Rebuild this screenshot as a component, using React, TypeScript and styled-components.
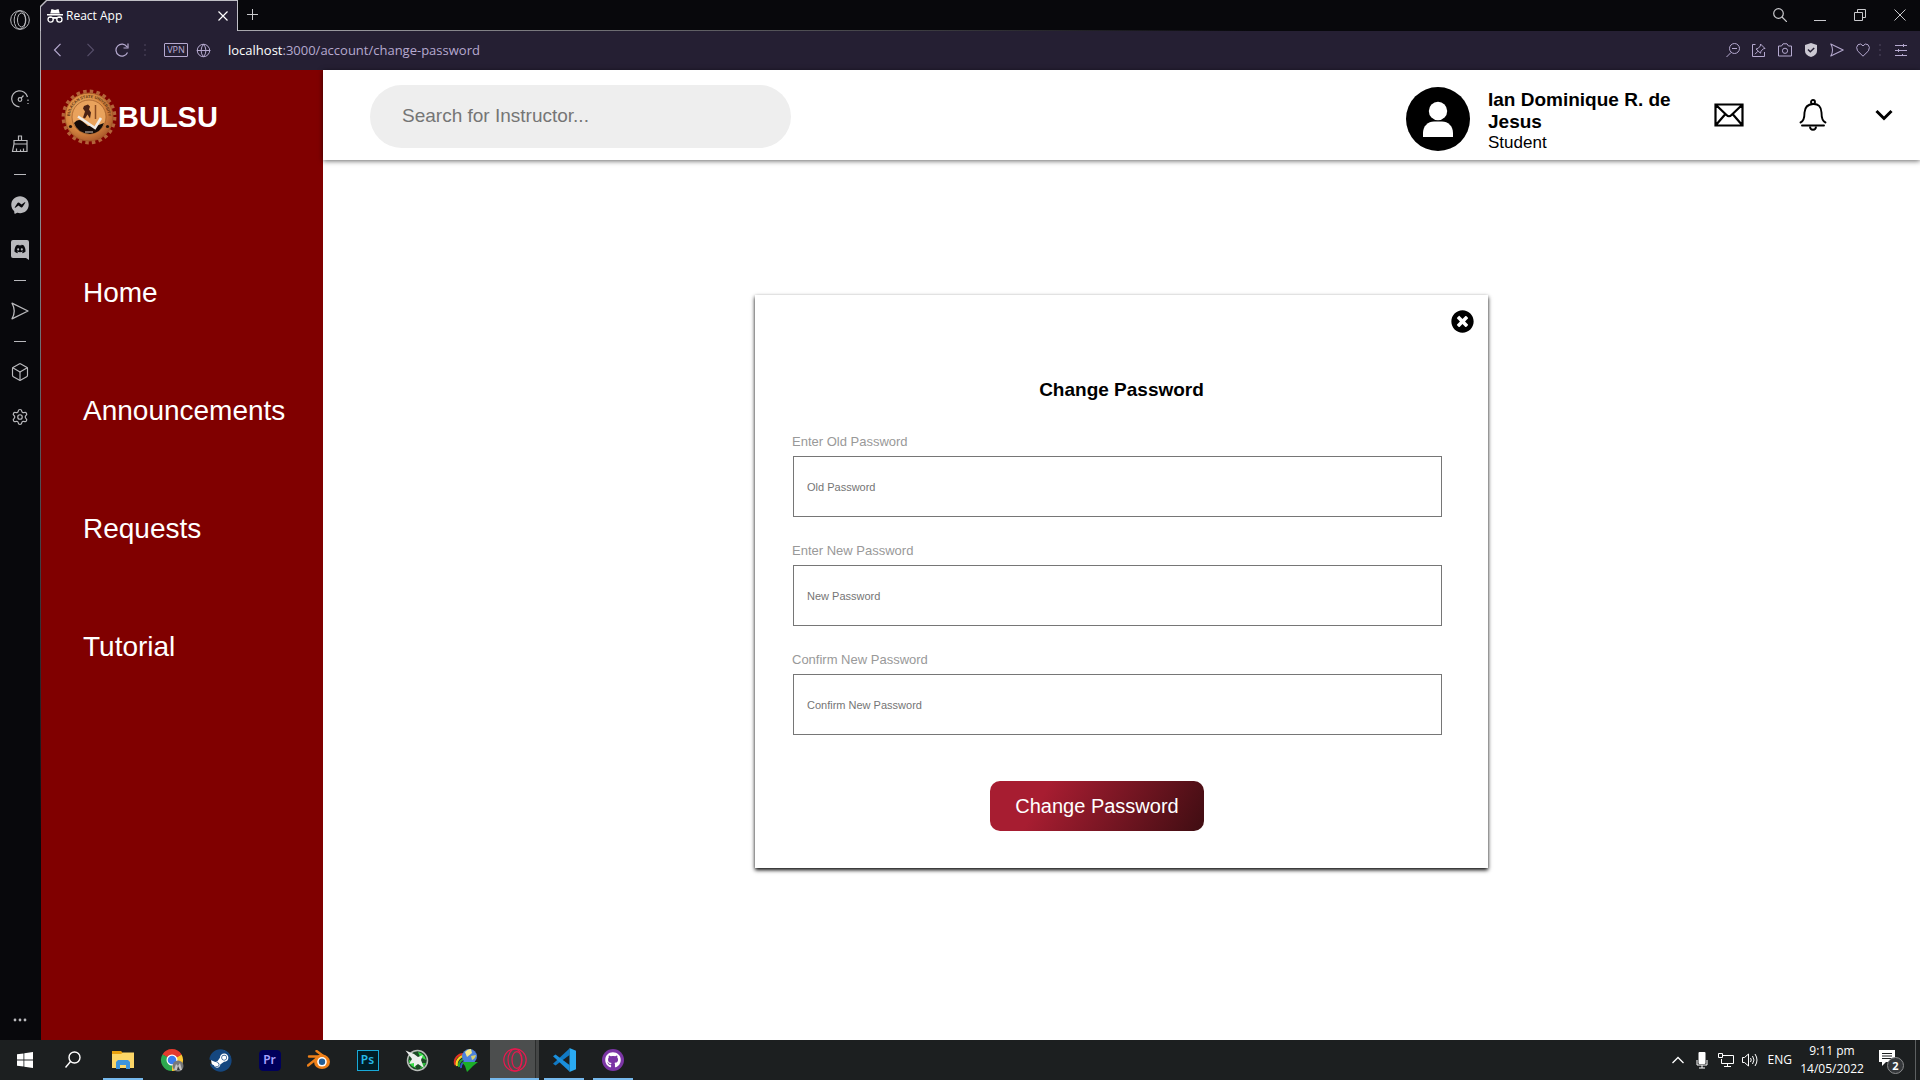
import React from "react";
import styled, { createGlobalStyle, css } from "styled-components";
import { Box, Settings, Globe } from "lucide-react";
import { FaTimesCircle, FaFacebookMessenger, FaDiscord, FaSteam, FaGithub } from "react-icons/fa";

const ui = `"Noto Sans", "Open Sans", sans-serif`;
const page = `"Liberation Sans", Arial, sans-serif`;

const GlobalStyle = createGlobalStyle`
  *, *::before, *::after { box-sizing: border-box; }
  body { margin: 0; background: #08080c; }
  button, input { font: inherit; margin: 0; }
`;

const Desktop = styled.div`
  min-height: 100vh;
  display: flex;
  flex-direction: column;
  font-family: ${ui};
`;

const Browser = styled.div`
  flex: 1;
  display: flex;
  background: #08080c;
`;

const bareButton = css`
  border: 0;
  padding: 0;
  background: none;
  color: inherit;
  display: inline-flex;
  align-items: center;
  justify-content: center;
  cursor: pointer;
`;

const IconButton = styled.button<{ $w?: number; $h?: number }>`
  ${bareButton}
  flex: none;
  width: ${(p) => p.$w ?? 20}px;
  height: ${(p) => p.$h ?? 20}px;
  svg { display: block; flex: none; }
  &:disabled { color: #564e69; }
`;

/* ---------- browser rail ---------- */

const Rail = styled.aside`
  width: 40px;
  flex: none;
  display: flex;
  flex-direction: column;
  align-items: center;
  padding: 8px 1px 10px 0;
  color: #b9b9bd;
`;

const RailGroup = styled.div<{ $top?: number }>`
  display: flex;
  flex-direction: column;
  align-items: center;
  gap: 21px;
  margin-top: ${(p) => p.$top ?? 0}px;
`;

const RailDash = styled.hr`
  width: 12px;
  height: 1px;
  border: 0;
  margin: 18px 0 0;
  background: #b9b9bd;
`;

const RailMore = styled.div`
  margin-top: auto;
`;

/* ---------- browser chrome ---------- */

const Window = styled.div`
  flex: 1;
  min-width: 0;
  display: flex;
  flex-direction: column;
`;

const TabStrip = styled.div`
  height: 31px;
  display: flex;
`;

const chamfer = css`
  clip-path: polygon(6px 0, 100% 0, 100% 100%, 0 100%, 0 6px);
`;

const Tab = styled.div`
  ${chamfer}
  width: 198px;
  padding: 1px 1px 0;
  background: #c0bfc6;
`;

const TabFace = styled.div`
  ${chamfer}
  height: 100%;
  display: flex;
  align-items: center;
  gap: 3px;
  padding: 0 4px 0 6px;
  background: #251f33;
  color: #fff;
  font-size: 12px;
  line-height: 16px;
`;

const TabTitle = styled.span`
  flex: 1;
  font-family: "Open Sans", sans-serif;
`;

const StripRest = styled.div`
  flex: 1;
  display: flex;
  align-items: center;
  justify-content: space-between;
  padding: 0 10px 2px 4px;
  color: #c9c9cd;
  background: linear-gradient(90deg, #a9a8ae, #08080c 60%) bottom / 100% 1px no-repeat;
`;

const WindowControls = styled.div`
  display: flex;
  gap: 20px;
`;

const AddressBar = styled.div`
  height: 39px;
  display: flex;
  align-items: center;
  padding: 0 9px 1px 7px;
  border-left: 1px solid #a9a8ae;
  background: #251f33;
  color: #b5a9cf;
`;

const NavButtons = styled.div`
  display: flex;
  gap: 12px;
`;

const Dots = styled.span<{ $left: number; $right: number }>`
  width: 2px;
  height: 12px;
  flex: none;
  margin: 0 ${(p) => p.$right}px 0 ${(p) => p.$left}px;
  background: repeating-linear-gradient(#3a3349 0 2px, transparent 2px 5px);
`;

const Vpn = styled.button`
  ${bareButton}
  width: 24px;
  height: 14px;
  border: 1px solid #b5a9cf;
  border-radius: 1px;
  font-size: 9px;
  line-height: 12px;
`;

const Url = styled.div`
  margin-left: 10px;
  flex: 1;
  font-family: "Open Sans", sans-serif;
  font-size: 13px;
  line-height: 18px;
  color: #b5a9cf;
  b { color: #fff; font-weight: 400; }
`;

const ToolButtons = styled.div`
  display: flex;
  gap: 6px;
`;

/* ---------- web page ---------- */

const Viewport = styled.div`
  flex: 1;
  display: flex;
`;

const Edge = styled.div`
  width: 1px;
  flex: none;
  background: linear-gradient(#a9a8ae, #55545a 40%, #08080c 80%);
`;

const SideNav = styled.nav`
  width: 282px;
  flex: none;
  background: #800000;
  color: #fff;
  font-family: ${page};
`;

const Brand = styled.a`
  display: flex;
  align-items: center;
  gap: 1px;
  padding: 19px 0 0 20px;
  color: inherit;
  text-decoration: none;
  font-size: 29px;
  line-height: 56px;
  font-weight: 700;
`;

const Menu = styled.ul`
  list-style: none;
  margin: 132px 0 0;
  padding: 0 0 0 42px;
  display: flex;
  flex-direction: column;
  gap: 86px;
`;

const MenuLink = styled.a`
  display: block;
  color: #fff;
  text-decoration: none;
  font-size: 28px;
  line-height: 32px;
`;

const Content = styled.div`
  flex: 1;
  min-width: 0;
  display: flex;
  flex-direction: column;
  background: #fff;
  color: #000;
  font-family: ${page};
`;

const Header = styled.header`
  height: 90px;
  display: flex;
  align-items: center;
  padding: 2px 27px 0 47px;
  background: #fff;
  box-shadow: 0 1px 5px rgba(0, 0, 0, 0.6);
`;

const Search = styled.input`
  width: 421px;
  height: 63px;
  padding: 0 32px;
  border: 0;
  border-radius: 32px;
  background: #eee;
  font-size: 19px;
  line-height: 22px;
  &::placeholder { color: #757575; opacity: 1; }
`;

const Profile = styled.div`
  margin-left: auto;
  padding-top: 6px;
  display: flex;
  align-items: center;
  gap: 18px;
`;

const Who = styled.div`
  width: 190px;
  padding-top: 4px;
`;

const Name = styled.div`
  font-size: 19px;
  line-height: 22px;
  font-weight: 700;
`;

const Role = styled.div`
  font-size: 17px;
  line-height: 20px;
`;

const HeaderActions = styled.div`
  display: flex;
  align-items: center;
  margin-left: 29px;
  padding-bottom: 2px;
  gap: 40px;
`;

const Main = styled.main`
  flex: 1;
  display: flex;
  justify-content: center;
  align-items: flex-start;
  padding: 135px 0 100px;
`;

const Card = styled.section`
  width: 733px;
  padding: 14px 15px 37px 37px;
  background: #fff;
  box-shadow: 0 2px 4px #000;
`;

const CardTop = styled.div`
  display: flex;
  justify-content: flex-end;
`;

const CardTitle = styled.h1`
  margin: 46px 22px 0 0;
  text-align: center;
  font-size: 19px;
  line-height: 22px;
  font-weight: 700;
`;

const Form = styled.form`
  margin: 33px 31px 0 0;
  display: flex;
  flex-direction: column;
  gap: 26px;
`;

const Field = styled.label`
  display: flex;
  flex-direction: column;
  gap: 6px;
  font-size: 13px;
  line-height: 16px;
  color: #999;
`;

const PasswordInput = styled.input`
  height: 61px;
  margin-left: 1px;
  padding: 0 13px;
  border: 1px solid #767676;
  border-radius: 0;
  background: #fff;
  font-size: 11px;
  line-height: 14px;
  &::placeholder { color: #757575; opacity: 1; }
`;

const Actions = styled.div`
  display: flex;
  justify-content: center;
  padding: 20px 40px 0 0;
`;

const Submit = styled.button`
  width: 214px;
  height: 50px;
  border: 0;
  padding: 0;
  border-radius: 10px;
  background: linear-gradient(120deg, #a71d31 25%, #3f0d12 100%);
  color: #fff;
  font-size: 20px;
  line-height: 24px;
`;

/* ---------- task bar ---------- */

const Taskbar = styled.footer`
  height: 40px;
  display: flex;
  justify-content: space-between;
  background: #1c1f20;
  color: #fff;
`;

const Apps = styled.div`
  display: flex;
`;

const AppButton = styled.button<{ $open?: boolean; $active?: boolean }>`
  ${bareButton}
  width: 49px;
  height: 40px;
  background: ${(p) =>
    p.$active
      ? "linear-gradient(#76b9ed, #76b9ed) bottom / 100% 2px no-repeat, linear-gradient(90deg, #4c4e4e 45px, #2b2d2d 45px 46px, #444646 46px)"
      : p.$open
      ? "linear-gradient(#76b9ed, #76b9ed) 5px 100% / 40px 2px no-repeat"
      : "none"};
`;

const Adobe = styled.span<{ $fg: string; $bg: string; $edge: string; $round: number }>`
  width: 22px;
  height: 21px;
  display: flex;
  align-items: center;
  justify-content: center;
  border: 1px solid ${(p) => p.$edge};
  border-radius: ${(p) => p.$round}px;
  background: ${(p) => p.$bg};
  color: ${(p) => p.$fg};
  font-size: 12px;
  line-height: 14px;
  font-weight: 600;
`;

const Stack = styled.span`
  display: grid;
  place-items: center;
  > * { grid-area: 1 / 1; }
`;

const Disc = styled.span<{ $size: number; $bg: string }>`
  width: ${(p) => p.$size}px;
  height: ${(p) => p.$size}px;
  border-radius: 50%;
  background: ${(p) => p.$bg};
`;

const Tray = styled.div`
  display: flex;
  align-items: center;
  padding-right: 4px;
  font-family: "Open Sans", sans-serif;
  font-size: 12px;
  line-height: 18px;
`;

const TrayIcons = styled.div`
  display: flex;
  gap: 4px;
  margin-right: 8px;
`;

const Clock = styled.time`
  margin: 0 16px 0 10px;
  width: 60px;
  white-space: nowrap;
  display: flex;
  flex-direction: column;
  align-items: center;
`;

const Notices = styled.button`
  ${bareButton}
  position: relative;
  width: 26px;
  height: 28px;
  margin-right: 11px;
`;

const Count = styled.span`
  position: absolute;
  right: 0;
  bottom: 0;
  width: 17px;
  height: 17px;
  border: 1px solid #8a8c8d;
  border-radius: 50%;
  background: #34373a;
  font-size: 11px;
  line-height: 15px;
  font-weight: 700;
  text-align: center;
`;

const ShowDesktop = styled.div`
  width: 1px;
  height: 40px;
  background: #5d6061;
`;

/* ---------- drawings ---------- */

type LineProps = { w?: number; h?: number; box?: string; sw?: number; color?: string; children: React.ReactNode };
const Line = ({ w = 20, h = 20, box, sw = 1, color = "currentColor", children }: LineProps) => (
  <svg width={w} height={h} viewBox={box ?? `0 0 ${w} ${h}`} fill="none" stroke={color} strokeWidth={sw} aria-hidden="true">
    {children}
  </svg>
);

const OperaMark = ({ size = 20, sw = 1.2, color = "currentColor" }) => (
  <Line w={size} h={size} box="0 0 24 24" sw={sw} color={color}>
    <circle cx="12" cy="12" r="11.200" />
    <ellipse cx="12" cy="12" rx="7" ry="11" />
    <ellipse cx="13.800" cy="12" rx="4.800" ry="8.400" />
  </Line>
);

const Plane = ({ size = 18 }) => (
  <Line w={size} h={size} box="0 0 18 18" sw={1.3}>
    <path d="M1 1.200 17 9 1 16.800Q5.500 9 1 1.200Z" strokeLinejoin="round" />
  </Line>
);

const Seal = () => (
  <svg width="56" height="56" viewBox="0 0 56 56" aria-hidden="true">
    <defs>
      <radialGradient id="seal" cx="0.42" cy="0.4" r="0.65">
        <stop offset="0" stopColor="#f6c27c" />
        <stop offset="0.6" stopColor="#d98a42" />
        <stop offset="1" stopColor="#a8562a" />
      </radialGradient>
      <path id="sealArc" d="M10.500 36A19.200 19.200 0 1 1 45.500 36" />
    </defs>
    <circle cx="28" cy="28" r="25.400" fill="none" stroke="#b4633a" strokeWidth="4" strokeDasharray="3.500 3.150" />
    <circle cx="28" cy="28" r="24" fill="url(#seal)" stroke="#a65a28" strokeWidth="1" />
    <circle cx="28" cy="28" r="17" fill="#e9a25c" stroke="#8d4a1f" strokeWidth="0.6" />
    <text fontSize="4" fontWeight="700" fill="#5b3212" fontFamily="Liberation Sans, sans-serif">
      <textPath href="#sealArc" startOffset="50%" textAnchor="middle">BULACAN STATE UNIVERSITY</textPath>
    </text>
    <circle cx="9.500" cy="37.500" r="1.600" fill="#2a140a" />
    <circle cx="46.500" cy="37.500" r="1.600" fill="#2a140a" />
    <path d="M23 17l4-1.500 2 2-1 3 2 3-1 6-2.500-4-2.500 4-2-1 2-6-2-3z" fill="#4a2114" />
    <path d="M34.500 16v14" stroke="#8a4a22" strokeWidth="1.500" />
    <path d="M13 34q4-5 8-2l6 5h8l8-3q-3 10-14 11-13-1-16-11z" fill="#150b08" />
    <path d="M17 27.500 34 39l6-10" fill="none" stroke="#efeae6" strokeWidth="2.600" />
    <path d="M24 43h8" stroke="#d8c9bd" strokeWidth="1" />
  </svg>
);

const Avatar = () => (
  <svg width="64" height="64" viewBox="0 0 64 64" role="img" aria-label="Profile picture">
    <circle cx="32" cy="32" r="32" fill="#000" />
    <circle cx="32" cy="24" r="9.200" fill="#fff" />
    <path d="M17 50v-4c0-7 5-11.500 11-11.500h8c6 0 11 4.500 11 11.500v4z" fill="#fff" />
  </svg>
);

const Chrome = () => (
  <svg width="24" height="24" viewBox="0 0 24 24" aria-hidden="true">
    <path d="M12 12 2.470 6.500A11 11 0 0 1 21.530 6.500Z" fill="#e33b2e" />
    <path d="M12 12 21.530 6.500A11 11 0 0 1 12 23Z" fill="#fcc934" />
    <path d="M12 12V23A11 11 0 0 1 2.470 6.500Z" fill="#2da94f" />
    <path d="M12 6.500h9.500L12 12z" fill="#e33b2e" />
    <path d="M12 12 7.200 14.800 2.470 6.500z" fill="#2da94f" />
    <circle cx="12" cy="12" r="5.500" fill="#fff" />
    <circle cx="12" cy="12" r="4.300" fill="#3b7ded" />
    <circle cx="18" cy="18" r="5.500" fill="#77797b" />
    <path d="M14 22l2-6 2 2 2-3 2 7z" fill="#c3c3c3" />
    <path d="M17 22l1-4 2 4z" fill="#3b3b3b" />
  </svg>
);

const Explorer = () => (
  <svg width="22" height="20" viewBox="0 0 22 20" aria-hidden="true">
    <path d="M0 1h9l2 2h11v15H0z" fill="#e9a10f" />
    <path d="M0 4h9l2-1.500h11V18H0z" fill="#fcd667" />
    <path d="M4 19v-7l2-2h10l2 2v7h-4v-4H8v4z" fill="#3c94dc" />
  </svg>
);

const Blender = () => (
  <svg width="24" height="20" viewBox="0 0 24 20" aria-hidden="true">
    <path d="M9.500 1 19 8M2 6.500h14M1 15.500 11 7.500" fill="none" stroke="#ee8019" strokeWidth="2.400" strokeLinecap="round" />
    <ellipse cx="15" cy="11.800" rx="8" ry="7.200" fill="#ee8019" />
    <circle cx="15" cy="11.800" r="4.800" fill="#fff" />
    <circle cx="15" cy="11.800" r="3.200" fill="#235e97" />
  </svg>
);

const GreenPlane = () => (
  <svg width="24" height="24" viewBox="0 0 24 24" aria-hidden="true">
    <circle cx="12.500" cy="12.500" r="10" fill="#1d4a26" stroke="#b9bdb9" strokeWidth="1.500" />
    <path d="M13 4q7 2 8 8l-6-3zM4 12l5 2 2 6q-7-2-7-8z" fill="#35dd45" />
    <path d="M17 15h4q-2 5-6 6z" fill="#2eb83c" />
    <path d="M.5 2.500 9 6l4 3 5-2-2 5 3 8-6-4-4 3v-4l-5 1 3-5-3-4z" fill="#eceeec" />
  </svg>
);

const Idm = () => (
  <svg width="26" height="24" viewBox="0 0 26 24" fill="none" aria-hidden="true">
    <path d="M2.500 17A9 8 0 0 1 12 6" stroke="#e33422" strokeWidth="2" />
    <path d="M4 18A8.500 8 0 0 1 13 8" stroke="#f7d51f" strokeWidth="2.200" />
    <path d="M6 19A8 7 0 0 1 14 10.500" stroke="#29a336" strokeWidth="2" />
    <path d="M8 20A7 6 0 0 1 14 13" stroke="#3155c6" strokeWidth="2" />
    <circle cx="16.500" cy="8.500" r="7.500" fill="#4d82dc" />
    <path d="M12 4q3-3.500 6-3l1 4-5 4z" fill="#f3e88a" />
    <path d="M18 8l5-1q-1 4-4 5z" fill="#d7d06f" />
    <path d="M9 14l7 0 9 0-5 4-6 6-2-6z" fill="#1cad28" />
  </svg>
);

const VsCode = () => (
  <svg width="24" height="24" viewBox="0 0 24 24" aria-hidden="true">
    <path d="M1 15.800 17.500.5v6.500L3.500 17.500z" fill="#1179c4" />
    <path d="M1 8.200 17.500 23.500V17L3.500 6.500z" fill="#1a8fdc" />
    <path d="M17.500 0 24 2.800v18.400L17.500 24z" fill="#2aaaf2" />
  </svg>
);

/* ---------- screen ---------- */

const menu = ["Home", "Announcements", "Requests", "Tutorial"];
const fields = [
  { label: "Enter Old Password", hint: "Old Password" },
  { label: "Enter New Password", hint: "New Password" },
  { label: "Confirm New Password", hint: "Confirm New Password" },
];

export default function App() {
  return (
    <>
      <GlobalStyle />
      <Desktop>
        <Browser>
          <Rail>
            <IconButton aria-label="Opera menu" $h={24}><OperaMark /></IconButton>
            <RailGroup $top={55}>
              <IconButton aria-label="Speed dial" $h={24}>
                <Line w={18} h={18} sw={1.2}>
                  <path d="M8.500 16.800A8 8 0 1 1 16.500 7" />
                  <circle cx="9" cy="9.500" r="1.800" />
                  <path d="M10.200 8.200 12.500 5.500M17 9.500v1.500M17 13v1" />
                </Line>
              </IconButton>
              <IconButton aria-label="Cleaner" $h={24}>
                <Line w={18} h={18} sw={1.2}>
                  <path d="M7.500 5.500V1h3v4.500M3 5.500h13v11H1.500L3 9zM3 9h13M5.500 16.500v-3M9.500 16.500v-2M12.500 16.500v-3" />
                </Line>
              </IconButton>
            </RailGroup>
            <RailDash />
            <RailGroup $top={18}>
              <IconButton aria-label="Messenger" $h={24}><FaFacebookMessenger size={18} /></IconButton>
              <IconButton aria-label="Discord" $h={24}>
                <svg width="18" height="20" viewBox="0 0 18 20" aria-hidden="true">
                  <path d="M2 0h14a2 2 0 0 1 2 2v18l-3-2H2a2 2 0 0 1-2-2V2a2 2 0 0 1 2-2z" fill="#b9b9bd" />
                  <FaDiscord x={3} y={3} size={12} color="#08080c" />
                </svg>
              </IconButton>
            </RailGroup>
            <RailDash />
            <RailGroup $top={18}>
              <IconButton aria-label="My Flow" $h={24}><Plane /></IconButton>
            </RailGroup>
            <RailDash />
            <RailGroup $top={18}>
              <IconButton aria-label="Extensions" $h={24}><Box size={20} strokeWidth={1.4} /></IconButton>
              <IconButton aria-label="Settings" $h={24}><Settings size={18} strokeWidth={1.6} /></IconButton>
            </RailGroup>
            <RailMore>
              <IconButton aria-label="More">
                <svg width="14" height="4" viewBox="0 0 14 4" fill="currentColor" aria-hidden="true">
                  <circle cx="2" cy="2" r="1.400" /><circle cx="7" cy="2" r="1.400" /><circle cx="12" cy="2" r="1.400" />
                </svg>
              </IconButton>
            </RailMore>
          </Rail>

          <Window>
            <TabStrip>
              <Tab>
                <TabFace>
                  <svg width="16" height="14" viewBox="0 0 16 14" fill="#fff" aria-hidden="true">
                    <path d="M4.500 0 8 1l3.500-1 1.300 4.500H3.200zM0 5h16v1.600H0z" />
                    <circle cx="3.600" cy="10.500" r="2.600" fill="none" stroke="#fff" strokeWidth="1.300" />
                    <circle cx="12.400" cy="10.500" r="2.600" fill="none" stroke="#fff" strokeWidth="1.300" />
                    <path d="M6 9.800q2-1.200 4 0" fill="none" stroke="#fff" />
                    <path d="M1 8h14v1H1z" />
                  </svg>
                  <TabTitle>React App</TabTitle>
                  <IconButton aria-label="Close tab"><Line w={10} h={10} sw={1.2}><path d="m.5.5 9 9m0-9-9 9" /></Line></IconButton>
                </TabFace>
              </Tab>
              <StripRest>
                <IconButton aria-label="New tab"><Line w={11} h={11}><path d="M5.500 0v11M0 5.500h11" /></Line></IconButton>
                <WindowControls>
                  <IconButton aria-label="Search tabs"><Line w={14} h={14} sw={1.2}><circle cx="5.500" cy="5.500" r="4.800" /><path d="m9 9 5 5" /></Line></IconButton>
                  <IconButton aria-label="Minimize"><Line w={12} h={12}><path d="M0 11.500h12" /></Line></IconButton>
                  <IconButton aria-label="Restore"><Line w={12} h={12}><path d="M.5 3.500h8v8h-8zM3.500 3V.5h8v8H9" /></Line></IconButton>
                  <IconButton aria-label="Close window"><Line w={12} h={12}><path d="m.5.5 11 11m0-11-11 11" /></Line></IconButton>
                </WindowControls>
              </StripRest>
            </TabStrip>

            <AddressBar>
              <NavButtons>
                <IconButton aria-label="Back"><Line w={14} h={14} sw={1.2}><path d="m9.500.8-6 6.200 6 6.200" /></Line></IconButton>
                <IconButton aria-label="Forward" disabled><Line w={14} h={14} sw={1.2}><path d="m4.500.8 6 6.200-6 6.200" /></Line></IconButton>
                <IconButton aria-label="Reload"><Line w={14} h={14} sw={1.2}><path d="M12.500 9.500A6 6 0 1 1 12 3.800M13 .5v4.500H8.500" /></Line></IconButton>
              </NavButtons>
              <Dots $left={12} $right={18} />
              <Vpn type="button">VPN</Vpn>
              <IconButton aria-label="Site information" $w={30}><Globe size={15} strokeWidth={1.6} /></IconButton>
              <Url><b>localhost</b>:3000/account/change-password</Url>
              <ToolButtons>
                <IconButton aria-label="Zoom"><Line w={14} h={14}><circle cx="8.500" cy="5.500" r="5" /><path d="m5 9.500-4.500 4.500M6 5.500h5" /></Line></IconButton>
                <IconButton aria-label="Pinboard"><Line w={14} h={14}><path d="M3.500 1.500h-3v12h12V9M8.500 1l4.500 4.500-1.500.2-2.500 2.500-.5 2L4 6l2-.5L8.300 3zM6 8.200l-3 3" /></Line></IconButton>
                <IconButton aria-label="Snapshot"><Line w={14} h={14}><path d="M.5 3h3L5 .8h4L10.500 3h3v10H.5z" /><circle cx="7" cy="7.800" r="2.600" /></Line></IconButton>
                <IconButton aria-label="Ad blocker">
                  <svg width="12" height="14" viewBox="0 0 12 14" aria-hidden="true"><path d="M6 0l6 2v6q0 4-6 6-6-2-6-6V2z" fill="#cbc8d2" /><path d="m3 6.500 2.300 2.300L9.200 5" fill="none" stroke="#251f33" strokeWidth="1.500" /></svg>
                </IconButton>
                <IconButton aria-label="Send to flow"><Plane size={14} /></IconButton>
                <IconButton aria-label="Bookmark"><Line w={14} h={14}><path d="M7 13.200 1.500 7.800Q-.5 4 2 1.700q3-2 5 1.200 2-3.200 5-1.200 2.500 2.300.5 6.100z" /></Line></IconButton>
              </ToolButtons>
              <Dots $left={6} $right={10} />
              <IconButton aria-label="Easy setup"><Line w={12} h={12}><path d="M0 1.500h12M0 6.500h12M0 11.500h12M8.500 0v3M3.500 5v3M7.500 10v2" /></Line></IconButton>
            </AddressBar>

            <Viewport>
              <Edge />
              <SideNav>
                <Brand href="#"><Seal />BULSU</Brand>
                <Menu>
                  {menu.map((m) => (
                    <li key={m}><MenuLink href="#">{m}</MenuLink></li>
                  ))}
                </Menu>
              </SideNav>
              <Content>
                <Header>
                  <Search type="search" aria-label="Search for Instructor" placeholder="Search for Instructor..." />
                  <Profile>
                    <Avatar />
                    <Who>
                      <Name>Ian Dominique R. de Jesus</Name>
                      <Role>Student</Role>
                    </Who>
                  </Profile>
                  <HeaderActions>
                    <IconButton aria-label="Messages" $w={44} $h={32}>
                      <Line w={30} h={24} sw={2.2}><path d="M1.500 1.500h27v21h-27zM1.500 1.500l11 10.500q2.500 2.500 5 0l11-10.500M1.500 22.500l9.500-11M28.500 22.500l-9.500-11" /></Line>
                    </IconButton>
                    <IconButton aria-label="Notifications" $w={44} $h={32}>
                      <Line w={28} h={32} sw={1.9}>
                        <circle cx="14" cy="3" r="2" />
                        <path d="M1.500 23.500Q5.500 22 5.500 13.500 6 5.500 14 5t8.500 8.500q0 8.500 4 10M3 26.500h22" strokeLinecap="round" />
                        <path d="M11 27.500q0 3.200 3 3.200t3-3.200" />
                      </Line>
                    </IconButton>
                    <IconButton aria-label="Account menu" $w={18}>
                      <Line w={18} h={12} sw={3}><path d="m1.500 2 7.500 7.500L16.500 2" /></Line>
                    </IconButton>
                  </HeaderActions>
                </Header>
                <Main>
                  <Card>
                    <CardTop>
                      <IconButton type="button" aria-label="Close" $w={22} $h={24}><FaTimesCircle size={23} /></IconButton>
                    </CardTop>
                    <CardTitle>Change Password</CardTitle>
                    <Form>
                      {fields.map((f) => (
                        <Field key={f.label}>
                          {f.label}
                          <PasswordInput type="password" placeholder={f.hint} />
                        </Field>
                      ))}
                      <Actions><Submit type="button">Change Password</Submit></Actions>
                    </Form>
                  </Card>
                </Main>
              </Content>
            </Viewport>
          </Window>
        </Browser>

        <Taskbar>
          <Apps>
            <AppButton aria-label="Start">
              <svg width="16" height="16" viewBox="0 0 16 16" fill="#fff" aria-hidden="true"><path d="M0 2.300 6.500 1.400v6.200H0zM7.300 1.300 16 0v7.600H7.300zM0 8.400h6.500v6.200L0 13.700zM7.300 8.400H16V16l-8.700-1.300z" /></svg>
            </AppButton>
            <AppButton aria-label="Search"><Line w={18} h={18} sw={1.4}><circle cx="9.500" cy="6.500" r="5.500" /><path d="M5.500 10.500.5 16.500" /></Line></AppButton>
            <AppButton $open aria-label="File Explorer"><Explorer /></AppButton>
            <AppButton aria-label="Chrome"><Chrome /></AppButton>
            <AppButton aria-label="Steam">
              <Stack><Disc $size={20} $bg="#fff" /><FaSteam size={23} color="#15477f" /></Stack>
            </AppButton>
            <AppButton aria-label="Premiere Pro"><Adobe $fg="#a9a3ff" $bg="#00005b" $edge="#00005b" $round={4}>Pr</Adobe></AppButton>
            <AppButton aria-label="Blender"><Blender /></AppButton>
            <AppButton aria-label="Photoshop"><Adobe $fg="#26b8e6" $bg="#001d26" $edge="#18a9d8" $round={0}>Ps</Adobe></AppButton>
            <AppButton aria-label="Aircraft app"><GreenPlane /></AppButton>
            <AppButton aria-label="Download Manager"><Idm /></AppButton>
            <AppButton $active aria-label="Opera GX"><OperaMark size={24} color="#e8194f" /></AppButton>
            <AppButton $open aria-label="Visual Studio Code"><VsCode /></AppButton>
            <AppButton $open aria-label="GitHub Desktop">
              <Stack><Disc $size={22} $bg="#7b35a5" /><FaGithub size={16} color="#fff" /></Stack>
            </AppButton>
          </Apps>
          <Tray>
            <TrayIcons>
              <IconButton aria-label="Show hidden icons"><Line w={12} h={8} sw={1.3}><path d="m.5 7 5.500-5.500L11.500 7" /></Line></IconButton>
              <IconButton aria-label="Microphone">
                <svg width="12" height="17" viewBox="0 0 12 17" fill="#fff" aria-hidden="true"><rect x="2.500" y="0" width="7" height="12" rx="1" /><path d="M1 8v5h10V8M6 13v3M3 16h6" fill="none" stroke="#fff" /></svg>
              </IconButton>
              <IconButton aria-label="Network"><Line w={16} h={14}><path d="M5 2.500h10.500v8H3.500V6M.5.500h4v4h-4zM9.500 10.500v3M6 13.500h7" /></Line></IconButton>
              <IconButton aria-label="Volume"><Line w={16} h={14}><path d="M.5 4.500h2L6.500 1v12L2.500 9.500h-2zM8.500 5q1.500 2 0 4M10.500 3q3 4 0 8M13 1q4 6 0 12" /></Line></IconButton>
            </TrayIcons>
            <span>ENG</span>
            <Clock><span>9:11 pm</span><span>14/05/2022</span></Clock>
            <Notices aria-label="2 notifications">
              <svg width="26" height="28" viewBox="0 0 26 28" aria-hidden="true"><path d="M1 4h16v12H8l-4 4v-4H1z" fill="#fff" /><path d="M4 7.500h10M4 10h10M4 12.500h10" stroke="#1c1f20" /></svg>
              <Count>2</Count>
            </Notices>
            <ShowDesktop />
          </Tray>
        </Taskbar>
      </Desktop>
    </>
  );
}
